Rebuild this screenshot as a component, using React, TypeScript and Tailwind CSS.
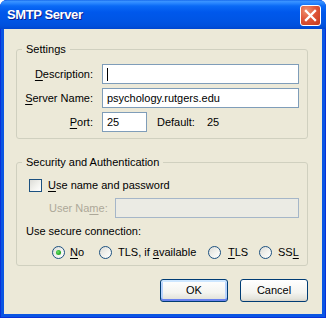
import React from "react";

function U({ children }: { children: React.ReactNode }) {
  return <span className="underline underline-offset-[2px] decoration-1">{children}</span>;
}

function Radio({ checked }: { checked?: boolean }) {
  return (
    <span className="w-[13px] h-[13px] shrink-0 rounded-full border border-[#1c5180] bg-[linear-gradient(135deg,#dcdcd7_0%,#f4f4f0_60%,#ffffff_100%)] flex items-center justify-center">
      {checked && (
        <span className="w-[5px] h-[5px] rounded-full bg-[radial-gradient(circle_at_40%_40%,#6fe06f_0%,#2fb52f_50%,#1a8f1a_100%)]" />
      )}
    </span>
  );
}

function Legend({ children }: { children: React.ReactNode }) {
  return <legend className="ml-[5px] px-[4px] leading-[13px]">{children}</legend>;
}

export default function App() {
  return (
    <div className="w-[326px] h-[318px] bg-white font-['Liberation_Sans',Arial,sans-serif] text-[11px] leading-[13px] text-black">
      <div className="w-full h-full flex flex-col rounded-t-[7px] overflow-hidden bg-[#0a55e3] shadow-[inset_0_0_0_1px_#0831d9]">
        {/* Title bar */}
        <div className="h-[29px] shrink-0 flex items-start justify-between pl-[7px] pr-[5px] bg-[linear-gradient(180deg,#0a5ce6_0px,#3d95ff_1px,#2b88ff_3px,#0a6af5_6px,#0058ec_12px,#0055e5_20px,#0050dc_26px,#0046cf_29px)]">
          <span className="mt-[7px] text-white font-bold text-[13px] leading-[16px] tracking-[-0.4px] [text-shadow:1px_1px_0_#0f1c8a]">
            SMTP Server
          </span>
          <span className="mt-[5px] w-[21px] h-[21px] rounded-[3px] border border-white bg-[radial-gradient(circle_at_30%_25%,#f0926f_0%,#e0573a_45%,#c4391b_100%)] flex items-center justify-center">
            <svg width="19" height="19" viewBox="0 0 19 19">
              <path d="M5 5 L14 14 M14 5 L5 14" stroke="white" strokeWidth="2.3" strokeLinecap="square" />
            </svg>
          </span>
        </div>

        {/* Body */}
        <div className="flex-1 mx-[4px] mb-[4px] bg-[#ece9d8] pl-[12px] pr-[14px] pt-[14px] flex flex-col">
          {/* Settings */}
          <fieldset className="border border-[#d0d0bf] rounded-[3px] p-0 m-0 min-w-0">
            <Legend>Settings</Legend>
            <div className="pt-[8px] pb-[6px] pl-[8px] pr-[8px] grid grid-cols-[68px_1fr] gap-x-[9px] gap-y-[4px] items-center">
              <span className="text-right whitespace-nowrap">
                <U>D</U>escription:
              </span>
              <div className="h-[20px] border border-[#7f9db9] bg-white flex items-center pl-[4px]">
                <span className="w-px h-[13px] bg-black" />
              </div>
              <span className="text-right whitespace-nowrap">
                <U>S</U>erver Name:
              </span>
              <div className="h-[20px] border border-[#7f9db9] bg-white flex items-center pl-[4px] whitespace-nowrap">
                psychology.rutgers.edu
              </div>
              <span className="text-right whitespace-nowrap">
                <U>P</U>ort:
              </span>
              <div className="flex items-center">
                <div className="w-[45px] h-[20px] border border-[#7f9db9] bg-white flex items-center pl-[4px]">25</div>
                <span className="ml-[10px] w-[50px]">Default:</span>
                <span>25</span>
              </div>
            </div>
          </fieldset>

          {/* Security */}
          <fieldset className="mt-[17px] border border-[#d0d0bf] rounded-[3px] p-0 m-0 min-w-0">
            <Legend>Security and Authentication</Legend>
            <div className="pt-[10px] pb-[6px] pl-[9px] pr-[8px] flex flex-col">
              <div className="flex items-center pl-[3px] h-[13px]">
                <span className="w-[13px] h-[13px] border border-[#1c5180] bg-[linear-gradient(135deg,#dcdcd7_0%,#f4f4f0_60%,#ffffff_100%)]" />
                <span className="ml-[6px]">
                  <U>U</U>se name and password
                </span>
              </div>
              <div className="mt-[6px] flex items-center pl-[23px]">
                <span className="w-[66px] text-[#aca899] whitespace-nowrap">
                  User Na<U>m</U>e:
                </span>
                <div className="flex-1 h-[20px] border border-[#a5b6c8] bg-[#ebebe4]" />
              </div>
              <div className="mt-[7px]">Use secure connection:</div>
              <div className="mt-[8px] flex items-center pl-[26px] h-[13px]">
                <div className="w-[47px] flex items-center">
                  <Radio checked />
                  <span className="ml-[5px]">
                    <U>N</U>o
                  </span>
                </div>
                <div className="w-[109px] flex items-center">
                  <Radio />
                  <span className="ml-[6px] whitespace-nowrap">
                    TLS, if <U>a</U>vailable
                  </span>
                </div>
                <div className="w-[51px] flex items-center">
                  <Radio />
                  <span className="ml-[7px]">
                    <U>T</U>LS
                  </span>
                </div>
                <div className="flex items-center">
                  <Radio />
                  <span className="ml-[6px]">
                    SS<U>L</U>
                  </span>
                </div>
              </div>
            </div>
          </fieldset>

          {/* Buttons */}
          <div className="mt-[13px] flex justify-end gap-[12px]">
            <button className="w-[68px] h-[23px] rounded-[3px] border border-[#003c74] bg-[linear-gradient(180deg,#ffffff_0%,#f4f4f0_60%,#e3e3db_90%,#d6d0c5_100%)] shadow-[inset_0_2px_0_#cee7ff,inset_0_-2px_0_#6982ee,inset_2px_0_0_#b8d3fd,inset_-2px_0_0_#b8d3fd] text-[11px] leading-[13px]">
              OK
            </button>
            <button className="w-[68px] h-[23px] rounded-[3px] border border-[#003c74] bg-[linear-gradient(180deg,#ffffff_0%,#f4f4f0_60%,#e3e3db_90%,#d6d0c5_100%)] text-[11px] leading-[13px]">
              Cancel
            </button>
          </div>
        </div>
      </div>
    </div>
  );
}
